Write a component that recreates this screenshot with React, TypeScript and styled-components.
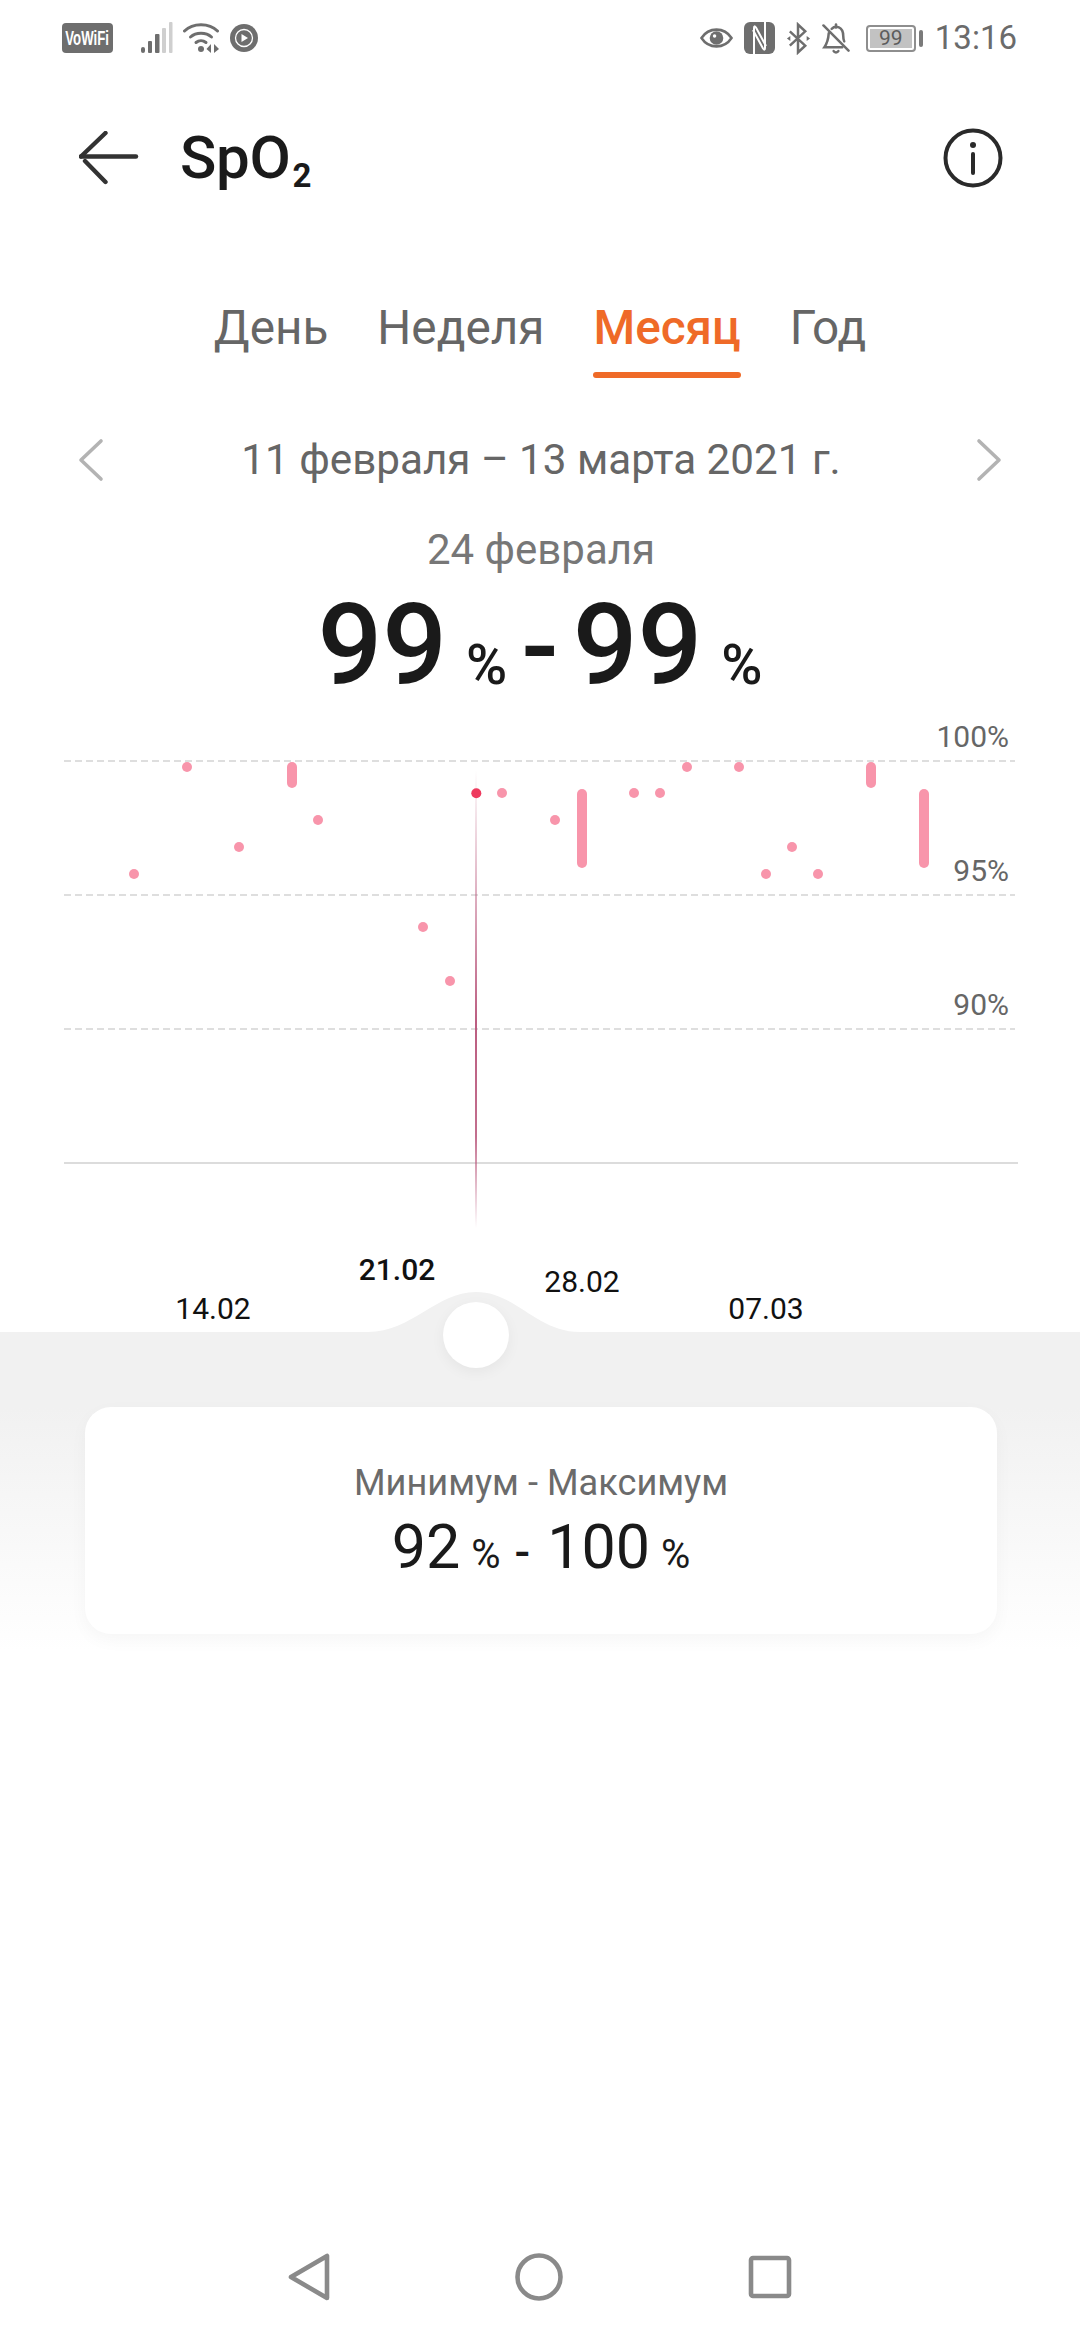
import React from 'react'
import styled, { createGlobalStyle } from 'styled-components'

const GlobalStyle = createGlobalStyle`
  html, body {
    margin: 0;
    padding: 0;
    background: #fff;
  }
  * {
    box-sizing: border-box;
  }
`

const Page = styled.div`
  width: 1080px;
  height: 2340px;
  display: flex;
  flex-direction: column;
  background: #fff;
  font-family: Roboto, 'Noto Sans', sans-serif;
  overflow: hidden;
`

const StatusBar = styled.div`
  height: 76px;
  padding: 0 63px 0 62px;
  display: flex;
  align-items: center;
  justify-content: space-between;
  color: #6b6b6b;
`

const StatusGroup = styled.div`
  display: flex;
  align-items: center;
  gap: ${(p: { $gap: number }) => p.$gap}px;
`

const VoWifi = styled.div`
  width: 51px;
  height: 30px;
  margin-right: 17px;
  border-radius: 4px;
  background: #6e6e6e;
  display: flex;
  align-items: center;
  justify-content: center;
  overflow: hidden;
`

const VoWifiText = styled.span`
  color: #fff;
  font-family: 'Liberation Sans', sans-serif;
  font-size: 20px;
  font-weight: 700;
  line-height: 30px;
  transform: scaleX(0.66);
`

const Battery = styled.div`
  width: 50px;
  height: 27px;
  margin-left: 5px;
  border: 2px solid #8e8e8e;
  border-radius: 4px;
  background: #c2c2c2;
  background-clip: content-box;
  padding: 2px;
  color: #5c5c5c;
  font-size: 21px;
  line-height: 19px;
  text-align: center;
`

const BatteryNub = styled.div`
  width: 4px;
  height: 17px;
  margin-left: -8px;
  border-radius: 2px;
  background: #7a7a7a;
`

const Clock = styled.div`
  margin-left: 1px;
  font-size: 33px;
  line-height: 40px;
  color: #6b6b6b;
`

const Header = styled.div`
  height: 164px;
  padding: 0 0 0 79px;
  display: flex;
  align-items: center;
`

const TitleText = styled.h1`
  margin: 0 0 0 41px;
  font-size: 60px;
  line-height: 70px;
  font-weight: 500;
  color: #1a1a1a;
  letter-spacing: -0.3px;
  flex: 1;
  sub {
    font-size: 33px;
    font-weight: 700;
    line-height: 0;
    vertical-align: -9px;
    margin-left: 2px;
  }
`

const InfoButton = styled.svg`
  margin-right: 77px;
  flex: none;
`

const Tabs = styled.div`
  height: 138px;
  padding-top: 58px;
  display: flex;
  justify-content: center;
  gap: 49px;
`

const Tab = styled.div<{ $active?: boolean }>`
  height: 80px;
  display: flex;
  flex-direction: column;
  font-size: 47.7px;
  line-height: 60px;
  font-weight: ${(p) => (p.$active ? 500 : 400)};
  color: ${(p) => (p.$active ? '#ef6a28' : '#666')};
  &::after {
    content: '';
    height: 6px;
    margin-top: 14px;
    border-radius: 3px;
    background: ${(p) => (p.$active ? '#ef6a28' : 'transparent')};
  }
`

const DateRow = styled.div`
  height: 70px;
  margin-top: 47px;
  padding: 0 78px;
  display: flex;
  align-items: center;
  justify-content: space-between;
`

const DateText = styled.div`
  margin-left: 2px;
  font-size: 42.2px;
  line-height: 48px;
  color: #666;
`

const DayLabel = styled.div`
  margin-top: 31px;
  padding-left: 2px;
  font-size: 42px;
  line-height: 48px;
  text-align: center;
  color: #777;
`

const BigRange = styled.div`
  height: 100px;
  margin-top: 21px;
  display: flex;
  align-items: baseline;
  justify-content: center;
  color: #1a1a1a;
`

const BigNumber = styled.span`
  font-size: 114px;
  line-height: 100px;
  font-weight: 500;
`

const BigUnit = styled.span`
  margin-left: 19px;
  font-size: 56px;
  line-height: 100px;
  font-weight: 500;
`

const BigDash = styled.span`
  margin: 0 14px 0 14px;
  font-size: 110px;
  line-height: 100px;
  font-weight: 500;
`

const ChartWrap = styled.div`
  position: relative;
  height: 632px;
  margin-top: 5px;
`

const ChartSvg = styled.svg`
  display: block;
  font-family: Roboto, sans-serif;
`

const Knob = styled.div`
  position: absolute;
  left: 443px;
  top: 602px;
  width: 66px;
  height: 66px;
  border-radius: 50%;
  background: #fff;
  box-shadow: 0 4px 14px rgba(0, 0, 0, 0.05);
  z-index: 1;
`

const Summary = styled.div`
  height: 340px;
  padding: 75px 83px 0 85px;
  background: linear-gradient(#f1f1f1 0, #f1f1f1 75px, #ffffff 320px);
`

const Card = styled.div`
  height: 227px;
  padding-top: 54px;
  border-radius: 26px;
  background: #fff;
  box-shadow: 0 6px 18px rgba(0, 0, 0, 0.035);
  text-align: center;
`

const CardTitle = styled.div`
  font-size: 36.2px;
  line-height: 44px;
  color: #6b6b6b;
`

const CardValue = styled.div`
  margin-top: 7px;
  display: flex;
  align-items: baseline;
  justify-content: center;
  color: #1a1a1a;
  line-height: 70px;
`

const CardNumber = styled.span`
  font-size: 61px;
`

const CardUnit = styled.span`
  margin-left: 11px;
  font-size: 40px;
`

const CardDash = styled.span`
  margin: 0 17px 0 14px;
  font-size: 46px;
  font-weight: 500;
`

const NavBar = styled.div`
  margin-top: auto;
  height: 126px;
  padding: 0 288px;
  display: flex;
  align-items: center;
  justify-content: space-between;
`

const gridLines = [
  { y: 61, label: '100%', labelY: 47 },
  { y: 195, label: '95%', labelY: 181 },
  { y: 329, label: '90%', labelY: 315 },
]

// x, y of single readings, in chart coordinates (chart starts at y=700)
const dots = [
  [134, 174],
  [187, 67],
  [239, 147],
  [318, 120],
  [423, 227],
  [450, 281],
  [502, 93],
  [555, 120],
  [634, 93],
  [660, 93],
  [687, 67],
  [739, 67],
  [766, 174],
  [792, 147],
  [818, 174],
]

const bars = [
  { x: 292, from: 67, to: 83 },
  { x: 582, from: 94, to: 163 },
  { x: 871, from: 67, to: 83 },
  { x: 924, from: 94, to: 163 },
]

const dateLabels = [
  { x: 213, y: 619, text: '14.02', bold: false },
  { x: 397, y: 580, text: '21.02', bold: true },
  { x: 582, y: 592, text: '28.02', bold: false },
  { x: 766, y: 619, text: '07.03', bold: false },
]

function Chart() {
  return (
    <ChartSvg width="1080" height="632" viewBox="0 0 1080 632">
      <defs>
        <linearGradient id="cursor" x1="0" y1="0" x2="0" y2="1">
          <stop offset="0" stopColor="#b8557a" stopOpacity="0" />
          <stop offset="0.55" stopColor="#b8557a" stopOpacity="0.95" />
          <stop offset="0.8" stopColor="#b8557a" stopOpacity="0.85" />
          <stop offset="1" stopColor="#b8557a" stopOpacity="0" />
        </linearGradient>
      </defs>
      {gridLines.map((g) => (
        <g key={g.label}>
          <line x1="64" x2="1015" y1={g.y} y2={g.y} stroke="#dedede" strokeWidth="2" strokeDasharray="7 4" />
          <text x="1009" y={g.labelY} textAnchor="end" fontSize="30" fill="#666">
            {g.label}
          </text>
        </g>
      ))}
      <line x1="64" x2="1018" y1="463" y2="463" stroke="#dcdcdc" strokeWidth="2" />
      <rect x="475" y="70" width="2" height="458" fill="url(#cursor)" />
      {dots.map(([x, y]) => (
        <circle key={`${x}-${y}`} cx={x} cy={y} r="5" fill="#f895ab" />
      ))}
      {bars.map((b) => (
        <line key={b.x} x1={b.x} x2={b.x} y1={b.from} y2={b.to} stroke="#f895ab" strokeWidth="10" strokeLinecap="round" />
      ))}
      <circle cx="476.3" cy="93.3" r="5" fill="#ee3a5e" />
      {dateLabels.map((d) => (
        <text
          key={d.text}
          x={d.x}
          y={d.y}
          textAnchor="middle"
          fontSize="30"
          fontWeight={d.bold ? 500 : 400}
          fill="#111"
        >
          {d.text}
        </text>
      ))}
      <path
        d="M368 632 C412 632 436 592 476 592 C516 592 536 632 580 632 Z"
        fill="#f1f1f1"
      />
    </ChartSvg>
  )
}

function StatusLeft() {
  return (
    <StatusGroup $gap={10}>
      <VoWifi>
        <VoWifiText>VoWiFi</VoWifiText>
      </VoWifi>
      <svg width="33" height="32" viewBox="0 0 33 32">
        <rect x="1" y="25" width="4" height="6" rx="2" fill="#6e6e6e" />
        <rect x="8" y="19" width="4" height="12" rx="1" fill="#6e6e6e" />
        <rect x="15" y="12" width="4.5" height="19" rx="1" fill="#6e6e6e" />
        <rect x="22" y="6" width="4" height="25" rx="1" fill="#cfcfcf" />
        <rect x="29" y="0" width="3.5" height="31" rx="1" fill="#cfcfcf" />
      </svg>
      <svg width="37" height="32" viewBox="0 0 37 32" fill="none" stroke="#6e6e6e" strokeWidth="3" strokeLinecap="round">
        <path d="M1.5 9 C10 0.5 26 0.5 34.5 9" />
        <path d="M7.5 15 C13 10 23 10 28.5 15" />
        <path d="M13 20.5 C16 18 20 18 23 20.5" />
        <circle cx="18" cy="27" r="3" fill="#6e6e6e" stroke="none" />
        <path d="M28 22 L28 31 L23.5 27 Z" fill="#6e6e6e" stroke="none" />
        <path d="M31 22 L31 31 L36 27 Z" fill="#6e6e6e" stroke="none" />
      </svg>
      <svg width="28" height="28" viewBox="0 0 28 28">
        <circle cx="14" cy="14" r="14" fill="#6e6e6e" />
        <circle cx="14" cy="14" r="8.5" fill="none" stroke="#fff" strokeWidth="1.3" />
        <path d="M11.5 10 L18 14 L11.5 18 Z" fill="#fff" />
      </svg>
    </StatusGroup>
  )
}

function StatusRight() {
  return (
    <StatusGroup $gap={11}>
      <svg width="33" height="26" viewBox="0 0 34 26" fill="none">
        <path d="M1.5 13 C9 1.5 25 1.5 32.5 13 C25 24.5 9 24.5 1.5 13 Z" stroke="#6e6e6e" strokeWidth="2.6" />
        <circle cx="17" cy="13" r="7" fill="#6e6e6e" />
        <circle cx="15" cy="11" r="1.8" fill="#fff" />
      </svg>
      <svg width="31" height="32" viewBox="0 0 31 32" fill="none">
        <rect width="31" height="32" rx="6" fill="#6e6e6e" />
        <path d="M10 32 V6 Q10 3 12 5.5 L22 24" stroke="#fff" strokeWidth="2" />
        <path d="M21 0 V26 Q21 29 19 26.5 L9 8" stroke="#fff" strokeWidth="2" />
      </svg>
      <svg width="25" height="33" viewBox="0 0 26 33" fill="none" stroke="#6e6e6e" strokeWidth="2.6">
        <path d="M4 9 L20 24 L12.5 31 V2 L20 9 L4 24" />
        <path d="M1 16.5 L4.5 14 V19 Z M25 16.5 L21.5 14 V19 Z" fill="#6e6e6e" stroke="none" />
      </svg>
      <svg width="28" height="33" viewBox="0 0 29 33" fill="none" stroke="#6e6e6e" strokeWidth="2.6" strokeLinecap="round">
        <path d="M1.5 3 L27.5 29" />
        <path d="M7 11 C6.5 18 5 22 2.5 25.5 H21" />
        <path d="M10 6.5 C12 4.5 15 4 17.5 5 C21 6.5 22 10 22 14 C22 16 22.4 18 23 19.5" />
        <path d="M14.5 5 V2" />
        <path d="M12 29.5 C13 31.5 16 31.5 17 29.5" />
      </svg>
      <Battery>99</Battery>
      <BatteryNub />
      <Clock>13:16</Clock>
    </StatusGroup>
  )
}

function BackArrow() {
  return (
    <svg width="60" height="54" viewBox="0 0 60 54" fill="none" stroke="#333" strokeWidth="4.4" strokeLinecap="round">
      <path d="M2 25.5 H57" />
      <path d="M2 25.5 L26.5 2" />
      <path d="M6 30 L26.5 51" />
    </svg>
  )
}

function Chevron({ right }: { right?: boolean }) {
  return (
    <svg width="26" height="44" viewBox="0 0 26 44" fill="none" stroke="#b3b3b3" strokeWidth="3.6" strokeLinecap="round" strokeLinejoin="round">
      <path d={right ? 'M3 3 L23 22 L3 41' : 'M23 3 L3 22 L23 41'} />
    </svg>
  )
}

function NavIcons() {
  const stroke = { fill: 'none', stroke: '#8a8a8a', strokeWidth: 4.6, strokeLinejoin: 'round' as const }
  return (
    <NavBar>
      <svg width="42" height="48" viewBox="0 0 42 48">
        <path d="M39 3 V45 L3 24 Z" {...stroke} />
      </svg>
      <svg width="48" height="48" viewBox="0 0 48 48">
        <circle cx="24" cy="24" r="21.5" {...stroke} />
      </svg>
      <svg width="44" height="44" viewBox="0 0 44 44">
        <rect x="3" y="3" width="38" height="38" rx="2" {...stroke} />
      </svg>
    </NavBar>
  )
}

export default function App() {
  return (
    <Page>
      <GlobalStyle />
      <StatusBar>
        <StatusLeft />
        <StatusRight />
      </StatusBar>
      <Header>
        <BackArrow />
        <TitleText>
          SpO<sub>2</sub>
        </TitleText>
        <InfoButton width="60" height="60" viewBox="0 0 60 60" fill="none" stroke="#2a2a2a" strokeWidth="4">
          <circle cx="30" cy="30" r="27.5" />
          <path d="M30 26 V45" strokeLinecap="round" />
          <circle cx="30" cy="17" r="3" fill="#2a2a2a" stroke="none" />
        </InfoButton>
      </Header>
      <Tabs>
        <Tab>День</Tab>
        <Tab>Неделя</Tab>
        <Tab $active>Месяц</Tab>
        <Tab>Год</Tab>
      </Tabs>
      <DateRow>
        <Chevron />
        <DateText>11 февраля – 13 марта 2021 г.</DateText>
        <Chevron right />
      </DateRow>
      <DayLabel>24 февраля</DayLabel>
      <BigRange>
        <BigNumber>99</BigNumber>
        <BigUnit>%</BigUnit>
        <BigDash>-</BigDash>
        <BigNumber>99</BigNumber>
        <BigUnit>%</BigUnit>
      </BigRange>
      <ChartWrap>
        <Chart />
        <Knob />
      </ChartWrap>
      <Summary>
        <Card>
          <CardTitle>Минимум - Максимум</CardTitle>
          <CardValue>
            <CardNumber>92</CardNumber>
            <CardUnit>%</CardUnit>
            <CardDash>-</CardDash>
            <CardNumber>100</CardNumber>
            <CardUnit>%</CardUnit>
          </CardValue>
        </Card>
      </Summary>
      <NavIcons />
    </Page>
  )
}
